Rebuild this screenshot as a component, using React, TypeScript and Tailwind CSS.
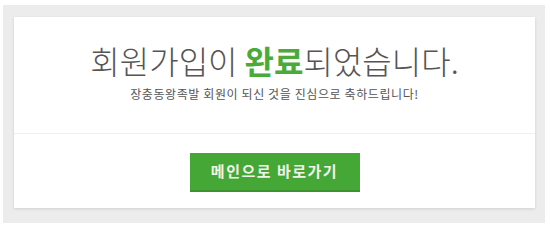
export default function App() {
  return (
    <div className="h-[229px] w-[550px] bg-white pl-[3px] pt-[5px] font-['Noto_Sans_CJK_KR',sans-serif]">
      <div className="h-[218px] w-[542px] bg-[#ececec] pl-[11px] pt-[12px]">
        <div className="flex h-[191px] w-[521px] flex-col bg-white shadow-[0_1px_3px_rgba(0,0,0,0.12)]">
          <div className="flex h-[116px] flex-col items-center pt-[23px]">
            <h1 className="text-[32px] font-light leading-[40px] text-[#555]">
              회원가입이 <span className="font-bold text-[#4aab3a]">완료</span>되었습니다.
            </h1>
            <p className="mt-[6px] text-[12px] leading-[16px] tracking-[0.6px] text-[#555]">
              장충동왕족발 회원이 되신 것을 진심으로 축하드립니다!
            </p>
          </div>
          <div className="flex flex-1 justify-center border-t border-[#f0f0f0] pt-[19px]">
            <button className="h-[39px] w-[170px] border-b-2 border-[#3b922f] bg-[#45a836] text-[15px] font-bold tracking-[1.5px] text-[#f2f4e8]">
              메인으로 바로가기
            </button>
          </div>
        </div>
      </div>
    </div>
  );
}
